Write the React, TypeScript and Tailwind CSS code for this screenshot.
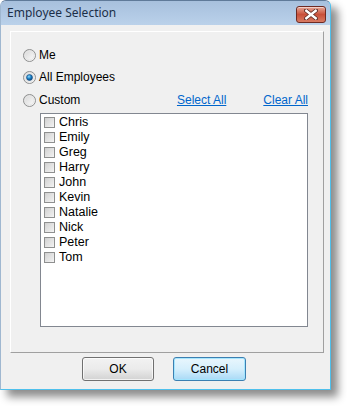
import React from "react";

const names = ["Chris", "Emily", "Greg", "Harry", "John", "Kevin", "Natalie", "Nick", "Peter", "Tom"];

function Radio({ checked }: { checked?: boolean }) {
  return (
    <svg width="13" height="13" viewBox="0 0 13 13" className="shrink-0">
      <defs>
        <linearGradient id={checked ? "rgc" : "rgu"} x1="0" y1="0" x2="1" y2="1">
          <stop offset="0" stopColor="#d4d4d4" />
          <stop offset="1" stopColor="#ffffff" />
        </linearGradient>
        <radialGradient id="dot" cx="0.4" cy="0.35" r="0.7">
          <stop offset="0" stopColor="#8fdcff" />
          <stop offset="0.5" stopColor="#1a7fc4" />
          <stop offset="1" stopColor="#0b3f72" />
        </radialGradient>
      </defs>
      <circle cx="6.5" cy="6.5" r="6" fill={`url(#${checked ? "rgc" : "rgu"})`} stroke="#8e8f8f" strokeWidth="1" />
      <circle cx="6.5" cy="6.5" r="4.5" fill="none" stroke="#e6e6e6" strokeWidth="1" />
      {checked && <circle cx="6.5" cy="6.5" r="3" fill="url(#dot)" stroke="#1b4f85" strokeWidth="0.6" />}
    </svg>
  );
}

function Check() {
  return (
    <span className="w-[11px] h-[11px] shrink-0 border border-[#8e8f8f] bg-gradient-to-br from-[#cfcfcf] to-[#f6f6f6] p-px">
      <span className="block w-full h-full bg-gradient-to-br from-[#d6d6d6] to-[#eeeeee]" />
    </span>
  );
}

export default function App() {
  return (
    <div className="w-[347px] h-[406px] bg-white" style={{ fontFamily: "'Liberation Sans', Arial, sans-serif" }}>
      <div className="w-[331px] h-[390px] flex flex-col rounded-t-[6px] border border-[#5f7a99] border-l-[#9fb7d0] border-r-[#4fc0ec] border-b-[#4fc0ec] shadow-[7px_7px_8px_rgba(0,0,0,0.45)] bg-[#bcd2ea]">
        {/* Title bar */}
        <div className="h-[24px] shrink-0 flex items-center justify-between pl-[6px] pr-[4px] rounded-t-[5px] bg-gradient-to-b from-[#a7c0dd] to-[#bad1ea]">
          <span className="text-[12px] text-[#1c2f48]" style={{ fontFamily: "'Noto Sans', 'Open Sans', sans-serif" }}>
            Employee Selection
          </span>
          <div className="w-[30px] h-[17px] mt-[3px] rounded-[3px] border border-[#6e2a22] bg-gradient-to-b from-[#e5a696] via-[#c9503a] to-[#d77a62] flex items-center justify-center shadow-[inset_0_1px_0_rgba(255,255,255,0.5)]">
            <svg width="14" height="11" viewBox="0 0 14 11">
              <path d="M2 1.5 L12 9.5 M12 1.5 L2 9.5" stroke="#5a2a24" strokeWidth="4" strokeLinecap="round" />
              <path d="M2.3 1.8 L11.7 9.2 M11.7 1.8 L2.3 9.2" stroke="#ffffff" strokeWidth="2.4" strokeLinecap="square" />
            </svg>
          </div>
        </div>
        {/* Client */}
        <div className="flex-1 flex flex-col bg-[#f0f0f0] pl-[9px] pt-[6px] pb-[6px]">
          <div className="w-[314px] h-[322px] flex flex-col border border-white border-r-[#a0a0a0] border-b-[#a0a0a0] pl-[12px] pr-[15px] pt-[16px] text-[12px] text-black">
            <div className="flex items-center gap-[3px] h-[14px]">
              <Radio />
              <span>Me</span>
            </div>
            <div className="flex items-center gap-[3px] h-[14px] mt-[8px]">
              <Radio checked />
              <span>All Employees</span>
            </div>
            <div className="flex items-center h-[14px] mt-[9px]">
              <div className="flex items-center gap-[3px]">
                <Radio />
                <span>Custom</span>
              </div>
              <span className="ml-auto text-[#0066cc] underline">Select All</span>
              <span className="ml-[37px] text-[#0066cc] underline">Clear All</span>
            </div>
            <div className="ml-[17px] mt-[6px] h-[214px] border border-[#828790] bg-white pt-[1px] pl-[3px] flex flex-col text-[12.5px]">
              {names.map((n) => (
                <div key={n} className="h-[15px] flex items-center gap-[4px]">
                  <Check />
                  <span className="leading-none">{n}</span>
                </div>
              ))}
            </div>
          </div>
          <div className="flex-1 flex items-center pl-[72px] gap-[19px] pt-[2px]">
            <div className="w-[72px] h-[24px] rounded-[3px] border border-[#707070] bg-gradient-to-b from-[#f2f2f2] via-[#ebebeb] to-[#d2d2d2] flex items-center justify-center text-[12px] shadow-[inset_0_0_0_1px_rgba(255,255,255,0.7)]">
              OK
            </div>
            <div className="w-[73px] h-[24px] rounded-[3px] border border-[#3c7fb1] bg-gradient-to-b from-[#e9f6fd] via-[#d5effc] to-[#a8d9f6] flex items-center justify-center text-[12px] shadow-[inset_0_0_0_1px_rgba(160,230,255,0.9)]">
              Cancel
            </div>
          </div>
        </div>
      </div>
    </div>
  );
}
